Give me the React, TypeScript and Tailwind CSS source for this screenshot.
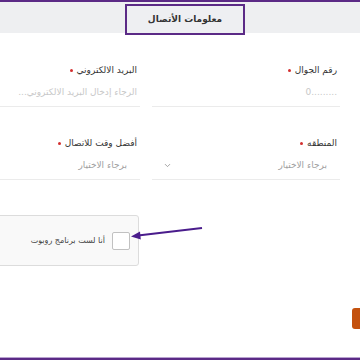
import { ChevronDown } from "lucide-react";

const fields = [
  { label: "رقم الجوال", placeholder: "0.........", select: false, ltr: true },
  { label: "البريد الالكتروني", placeholder: "الرجاء إدخال البريد الالكتروني...", select: false, ltr: false },
  { label: "المنطقه", placeholder: "برجاء الاختيار", select: true, ltr: false },
  { label: "أفضل وقت للاتصال", placeholder: "برجاء الاختيار", select: true, ltr: false },
];

function Field({
  label,
  placeholder,
  select,
  ltr,
}: {
  label: string;
  placeholder: string;
  select: boolean;
  ltr: boolean;
}) {
  return (
    <div className="flex flex-col">
      <div className="h-[12px] text-[9px] leading-[12px] text-[#333] pr-[3px] whitespace-nowrap flex items-center gap-[4px]">
        <span>{label}</span>
        <span className="w-[3px] h-[3px] rounded-full bg-[#d32f2f]" />
      </div>
      <div className="mt-[10px] h-[21px] border-b border-[#ebebeb] flex items-start justify-between">
        <span
          dir={ltr ? "ltr" : undefined}
          className={
            select
              ? "pr-[13px] text-[9px] leading-[12px] text-[#a0a0a0] whitespace-nowrap"
              : "pr-[3px] text-[9px] leading-[12px] text-[#c8c8c8] whitespace-nowrap"
          }
        >
          {placeholder}
        </span>
        {select && (
          <ChevronDown className="ml-[11px] mt-[2px] w-[9px] h-[9px] text-[#888]" strokeWidth={2} />
        )}
      </div>
    </div>
  );
}

export default function App() {
  return (
    <div
      className="relative w-[360px] h-[360px] overflow-hidden bg-white"
      style={{ fontFamily: '"DejaVu Sans", sans-serif' }}
    >
      <div className="h-[2px] bg-[#5b2a86]" />
      <div className="h-[31px] bg-[#eeeff1] pl-[125px] pt-[2px]">
        <div className="w-[120px] h-[31px] border-2 border-[#5b2a86] bg-[#eeeff2] flex items-center justify-center">
          <span dir="rtl" className="text-[9px] font-bold text-[#333]">
            معلومات الأتصال
          </span>
        </div>
      </div>

      <div dir="rtl" className="pr-[20px] pt-[31px]">
        <div className="w-[388px] grid grid-cols-[188px_188px] gap-x-[12px] gap-y-[30px]">
          {fields.map((f) => (
            <Field key={f.label} {...f} />
          ))}
        </div>
      </div>

      <div dir="rtl" className="pr-[221px] mt-[35px]">
        <div className="w-[200px] h-[51px] bg-[#f9f9f9] border border-[#dcdcdc] rounded-[3px] flex items-center pr-[8px]">
          <div className="w-[18px] h-[18px] bg-white border border-[#c1c1c1] rounded-[2px]" />
          <span className="mr-[7px] text-[8px] text-[#444] whitespace-nowrap">أنا لست برنامج روبوت</span>
        </div>
      </div>

      <div className="pl-[352px] mt-[42px]">
        <div className="w-[60px] h-[21px] bg-[#c4510e] rounded-[3px]" />
      </div>

      <div className="mt-[28px] h-[3px] bg-[#5b2a86] border-t border-[#b9a2d0]" />

      <svg className="absolute left-0 top-0 pointer-events-none" width="360" height="360">
        <line x1="202" y1="228" x2="138" y2="235.5" stroke="#4a1c8c" strokeWidth="2" />
        <polygon points="131,236.5 140,231.5 140.8,239.5" fill="#4a1c8c" />
      </svg>
    </div>
  );
}
